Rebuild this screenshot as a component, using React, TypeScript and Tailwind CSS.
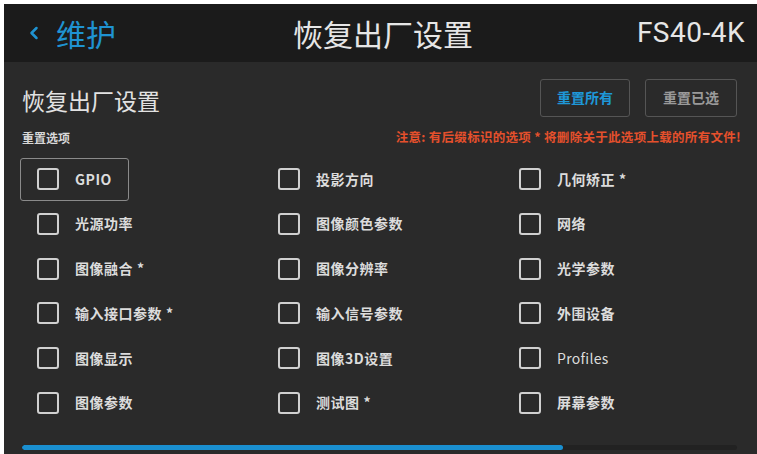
import { ChevronLeft } from 'lucide-react';

const options: { label: string; starred?: boolean }[][] = [
  [{ label: 'GPIO' }, { label: '投影方向' }, { label: '几何矫正', starred: true }],
  [{ label: '光源功率' }, { label: '图像颜色参数' }, { label: '网络' }],
  [{ label: '图像融合', starred: true }, { label: '图像分辨率' }, { label: '光学参数' }],
  [{ label: '输入接口参数', starred: true }, { label: '输入信号参数' }, { label: '外围设备' }],
  [{ label: '图像显示' }, { label: '图像3D设置' }, { label: 'Profiles' }],
  [{ label: '图像参数' }, { label: '测试图', starred: true }, { label: '屏幕参数' }],
];

const font = { fontFamily: '"Noto Sans CJK SC", "Noto Sans", sans-serif' };

function OptionItem({ label, starred, focused }: { label: string; starred?: boolean; focused?: boolean }) {
  const latin = label === 'Profiles';
  return (
    <div
      className={`inline-flex items-center gap-4 h-[43px] pl-[16px] pr-[16px] rounded-[3px] border ${
        focused ? 'border-[#8a8a8a]' : 'border-transparent'
      }`}
    >
      <span className="w-[22px] h-[22px] rounded-[3px] border-2 border-[#d0d0d0] shrink-0" />
      <span
        className={`text-[14px] text-[#dcdcdc] ${latin ? 'font-normal tracking-[0.3px]' : 'font-bold tracking-[0.5px]'}`}
      >
        {label}
        {starred && <span className="ml-1">*</span>}
      </span>
    </div>
  );
}

export default function App() {
  return (
    <div className="w-[757px] h-[454px] bg-white pt-[4px] pl-[4px] overflow-hidden" style={font}>
      <div className="w-[753px] h-[450px] bg-[#2a2a2a] flex flex-col">
        {/* top bar */}
        <div className="h-[58px] shrink-0 bg-[#1b1b1b] flex items-center pl-[20px] pr-[12px] relative">
          <div className="flex items-center gap-[12px] text-[#1f93d2]">
            <ChevronLeft size={20} strokeWidth={3} />
            <span className="text-[30px] leading-none">维护</span>
          </div>
          <div className="absolute left-0 right-0 pl-[5px] text-center text-[30px] text-[#e6e6e6] leading-none pointer-events-none">
            恢复出厂设置
          </div>
          <span
            className="ml-auto text-[28px] text-[#e6e6e6] leading-none tracking-[0.5px]"
            style={{ fontFamily: 'Roboto, sans-serif' }}
          >
            FS40-4K
          </span>
        </div>

        {/* body */}
        <div className="flex-1 flex flex-col px-[16px] pt-[16px]">
          <div className="flex items-center">
            <span className="ml-[2px] mt-[5px] text-[23px] text-[#e2e2e2]">恢复出厂设置</span>
            <div className="ml-auto flex gap-[15px] mr-[4px]">
              <button className="w-[90px] h-[38px] border border-[#555] rounded-[3px] text-[14px] font-bold text-[#1e98d8]">
                重置所有
              </button>
              <button className="w-[92px] h-[38px] border border-[#555] rounded-[3px] text-[14px] font-bold text-[#9a9a9a]">
                重置已选
              </button>
            </div>
          </div>

          <div className="flex items-center mt-[12px] h-[16px]">
            <span className="ml-[2px] text-[12px] font-bold text-[#d8d8d8]">重置选项</span>
            <span className="ml-auto text-[12.5px] font-bold text-[#e5502c] whitespace-nowrap tracking-[0.3px]">
              注意: 有后缀标识的选项 * 将删除关于此选项上载的所有文件!
            </span>
          </div>

          <div className="grid grid-cols-[241px_241px_241px] auto-rows-[44.8px] mt-[12px]">
            {options.flat().map((o, i) => (
              <div key={i} className="flex items-start">
                <OptionItem label={o.label} starred={o.starred} focused={i === 0} />
              </div>
            ))}
          </div>

          {/* progress */}
          <div className="mt-auto mb-[4px] ml-[2px] mr-[4px] h-[5px] bg-[#222] rounded-full overflow-hidden flex">
            <div className="w-[541px] h-full bg-[#1a8fd0] rounded-full" />
          </div>
        </div>
      </div>
    </div>
  );
}
